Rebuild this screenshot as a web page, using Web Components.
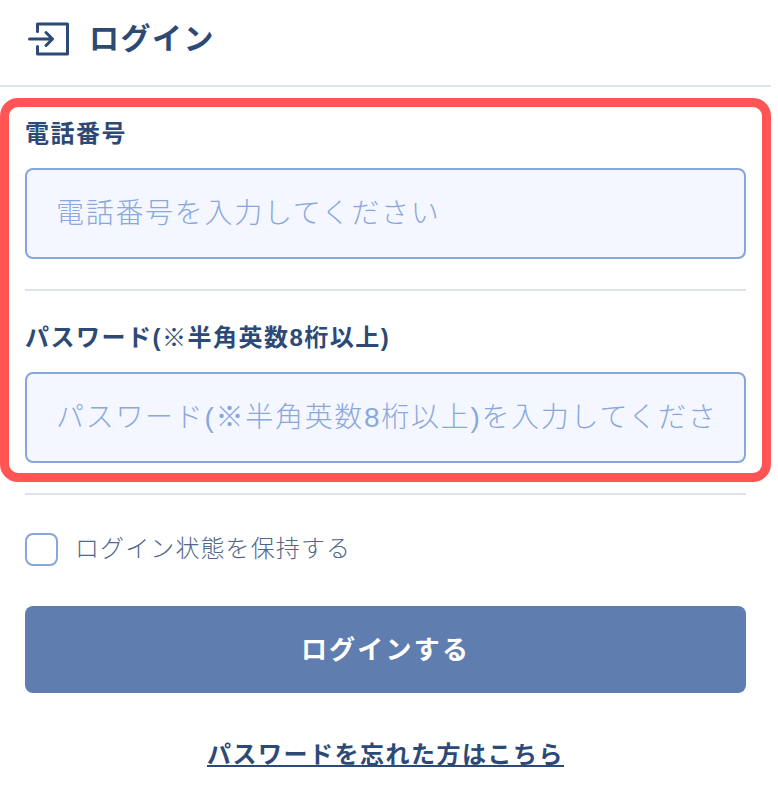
<!DOCTYPE html>
<html lang="ja"><head><meta charset="utf-8">
<style>
html,body{margin:0;padding:0;background:#fff;}
body{width:771px;font-family:"Liberation Sans","Noto Sans CJK JP",sans-serif;color:#2c4a75;}
</style></head><body>
<login-page>
<login-header slot="header">ログイン</login-header>
<form-field label="電話番号" placeholder="電話番号を入力してください"></form-field>
<form-field label="パスワード(※半角英数8桁以上)" placeholder="パスワード(※半角英数8桁以上)を入力してください" type="password"></form-field>
<login-check>ログイン状態を保持する</login-check>
<login-button>ログインする</login-button>
<login-link>パスワードを忘れた方はこちら</login-link>
</login-page>
<script>
function def(name,html){customElements.define(name,class extends HTMLElement{
  constructor(){super();this.attachShadow({mode:'open'}).innerHTML=html;}
  connectedCallback(){
    const l=this.shadowRoot.querySelector('[data-label]');if(l)l.textContent=this.getAttribute('label');
    const i=this.shadowRoot.querySelector('input.f');if(i){i.placeholder=this.getAttribute('placeholder');i.type=this.getAttribute('type')||'tel';}
  }
});}
def('login-page',`<style>
:host{display:block;position:relative;height:800px;overflow:hidden}
.frame{position:absolute;left:0;top:98px;width:771px;height:384px;box-sizing:border-box;border:9px solid #ff5555;border-radius:18px;pointer-events:none}
.body{padding:0 25px;display:flex;flex-direction:column}
</style><slot name="header"></slot><div class="body"><slot></slot></div><div class="frame"></div>`);
def('login-header',`<style>
:host{display:flex;align-items:center;box-sizing:content-box;height:77px;padding:0 0 8px 28px;border-bottom:2px solid #dfe3ef;gap:19px;font-size:30px;letter-spacing:1.5px;font-weight:700;line-height:1;color:#2c4a75}
svg{display:block;flex:none}
</style><svg width="42" height="34" viewBox="0 0 42 34" fill="none" stroke="#2c4a75" stroke-width="3" stroke-linecap="round" stroke-linejoin="round"><path d="M9.5 9.500V2H39.500V32H9.500V24.500"/><path d="M1.500 17H24.500M18 10.500L24.500 17L18 23.500"/></svg><span><slot></slot></span>`);
def('form-field',`<style>
:host{display:block;padding-top:30px;border-bottom:2px solid #dfe3ef;padding-bottom:30px}
label{display:block;font-size:24px;letter-spacing:1.5px;font-weight:700;line-height:34px;margin-bottom:17px;color:#2c4a75}
input{display:block;box-sizing:border-box;width:100%;height:91px;border:2px solid #86a6dc;border-radius:8px;background:#f4f7ff;padding:0 29px;font:inherit;font-size:28px;font-weight:300;letter-spacing:1.7px;color:#2c4a75;outline:0}
input::placeholder{color:#8aa7de;opacity:1}
</style><label data-label></label><input class="f">`);
def('login-check',`<style>
:host{display:flex;align-items:center;gap:17px;margin-top:37px;font-size:24px;font-weight:300;letter-spacing:1.1px;line-height:34px;color:#52688a}
.b{width:33px;height:33px;box-sizing:border-box;border:2px solid #86a6dc;border-radius:8px;background:#fff;flex:none}
</style><span class="b"></span><span><slot></slot></span>`);
def('login-button',`<style>
:host{display:flex;align-items:center;justify-content:center;box-sizing:border-box;height:87px;padding-bottom:5px;margin-top:40px;background:#5f7daf;border-radius:8px;color:#fff;font-size:26px;letter-spacing:2.2px;font-weight:700}
</style><slot></slot>`);
def('login-link',`<style>
:host{display:block;text-align:center;margin-top:42px;font-size:24px;letter-spacing:1.5px;font-weight:700;line-height:40px;color:#2c4a75}
a{color:inherit;text-decoration:underline;text-underline-offset:2px}
</style><a href="#"><slot></slot></a>`);
</script>
</body></html>
